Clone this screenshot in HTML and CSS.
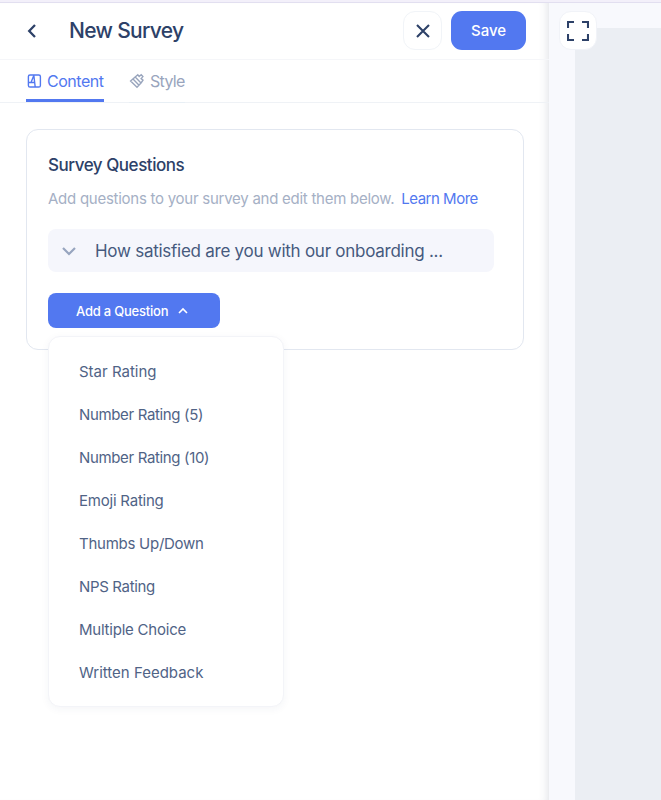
FILE: index.html
```html
<!DOCTYPE html>
<html lang="en">
<head>
    <meta charset="UTF-8">
    <meta name="viewport" content="width=device-width, initial-scale=1.0">
    <title>New Survey</title>
    <link rel="stylesheet" href="styles.css">
</head>
<body>
    <div class="app">
        <div class="editor">
            <header class="header">
                <button class="back" aria-label="Back">
                    <svg width="12" height="16" viewBox="0 0 12 16"><path d="M9 2 3.2 8 9 14"/></svg>
                </button>
                <h1><span class="t-title">New Survey</span></h1>
                <button class="close" aria-label="Close">
                    <svg width="16" height="16" viewBox="0 0 16 16"><path d="M2 2 14 14M14 2 2 14"/></svg>
                </button>
                <button class="save"><span class="t-save">Save</span></button>
            </header>

            <nav class="tabs">
                <a class="tab active" href="#">
                    <svg width="16" height="16" viewBox="0 0 16 16"><rect x="2.4" y="2" width="12" height="12" rx="1.6"/><path d="M7.800 2 9.200 14M7.800 2.500 5 9.500M2.400 9.500h6.200"/></svg>
                    <span class="t-content">Content</span>
                </a>
                <a class="tab" href="#">
                    <svg width="16" height="16" viewBox="0 0 16 16"><path d="M1.6 8 6.200 4 12 10 8 14.200ZM6.200 4l2.600-2.200 1.400 1.800 2-1.800 1.700 1.800-1.800 2 1.900 1.600L12 10M4 6l5.800 6"/></svg>
                    <span class="t-style">Style</span>
                </a>
            </nav>

            <section class="card">
                <h2><span class="t-heading">Survey Questions</span></h2>
                <p class="hint">
                    <span class="t-hint">Add questions to your survey and edit them below.</span>
                    <a href="#" class="t-learn">Learn More</a>
                </p>
                <div class="question">
                    <svg width="16" height="12" viewBox="0 0 16 12"><path d="M2 3l6 6 6-6"/></svg>
                    <span class="t-question">How satisfied are you with our onboarding ...</span>
                </div>
                <div class="dropdown">
                    <button class="add">
                        <span class="t-add">Add a Question</span>
                        <svg width="10" height="8" viewBox="0 0 10 8"><path d="M1 6l4-4 4 4"/></svg>
                    </button>
                    <ul class="menu">
                        <li><span class="t-star">Star Rating</span></li>
                        <li><span class="t-number">Number Rating (5)</span></li>
                        <li><span class="t-number">Number Rating (10)</span></li>
                        <li><span class="t-emoji">Emoji Rating</span></li>
                        <li><span class="t-thumbs">Thumbs Up/Down</span></li>
                        <li><span class="t-nps">NPS Rating</span></li>
                        <li><span class="t-multiple">Multiple Choice</span></li>
                        <li><span class="t-written">Written Feedback</span></li>
                    </ul>
                </div>
            </section>
        </div>

        <main class="preview">
            <div class="canvas"></div>
            <button class="expand" aria-label="Full screen">
                <svg width="22" height="20" viewBox="0 0 22 20"><path d="M1 7V1h6M15 1h6v6M1 13v6h6M21 13v6h-6"/></svg>
            </button>
        </main>
    </div>
</body>
</html>
```

FILE: styles.css
```css
* {
    box-sizing: border-box;
}

body {
    margin: 0;
    height: 800px;
    overflow: hidden;
    border-top: 2px solid #f3f0fa;
    background-color: #f8f9fd;
    font-family: Inter, "Open Sans", sans-serif;
    color: #2d4168;
}

button {
    padding: 0;
    border: none;
    background: none;
    font-family: inherit;
    color: inherit;
    cursor: pointer;
}

a {
    color: #5278f0;
    text-decoration: none;
}

svg {
    display: block;
    flex: none;
    fill: none;
    stroke: currentColor;
}

span {
    white-space: nowrap;
}

.app {
    display: flex;
    height: 798px;
    border-top: 1px solid #e2dff0;
}

.editor {
    width: 549px;
    flex: none;
    background-color: #fff;
    box-shadow: inset -9px 0 10px -8px rgba(45, 55, 90, 0.16);
}

.header {
    display: flex;
    align-items: center;
    height: 57px;
    padding: 0 23px 1px 26px;
    border-bottom: 1px solid #f5f6f9;
}

.back svg {
    stroke-width: 2.3;
}

h1 {
    flex: 1;
    margin: 0 0 0 31px;
    font-size: 21px;
    font-weight: 500;
}

.close {
    display: flex;
    align-items: center;
    justify-content: center;
    width: 39px;
    height: 39px;
    margin-right: 9px;
    border: 1px solid #f1f4f8;
    border-radius: 12px;
}

.close svg {
    stroke-width: 2.1;
}

.save {
    width: 75px;
    height: 39px;
    border-radius: 11px;
    background-color: #5278f0;
    color: #fff;
    font-size: 15px;
    font-weight: 500;
}

.tabs {
    display: flex;
    gap: 25px;
    height: 43px;
    padding-left: 26px;
    border-bottom: 1px solid #eff2f6;
}

.tab {
    display: flex;
    align-items: center;
    gap: 5px;
    height: 42px;
    padding-top: 2px;
    border-bottom: 3px solid transparent;
    box-shadow: 0 1px #e8eff5;
    color: #99a5bd;
    font-size: 16px;
}

.tab svg {
    stroke-width: 1.4;
}

.tab.active {
    width: 78px;
    border-bottom-color: #5278f0;
    box-shadow: none;
    color: #5278f0;
}

.card {
    width: 498px;
    height: 221px;
    margin: 26px 0 0 26px;
    padding: 23px 29px 0 21px;
    border: 1px solid #e2e7f0;
    border-radius: 12px;
}

h2 {
    margin: 0;
    font-size: 17px;
    font-weight: 500;
    line-height: 24px;
}

.hint {
    display: flex;
    gap: 7px;
    margin: 11px 0 19px;
    color: #a5b0c5;
    font-size: 15px;
    line-height: 22px;
    white-space: nowrap;
}

.question {
    display: flex;
    align-items: center;
    gap: 18px;
    height: 43px;
    padding-left: 13px;
    border-radius: 8px;
    background-color: #f5f6fc;
    color: #465a7e;
    font-size: 17px;
}

.question svg {
    stroke: #97a5bf;
    stroke-width: 2.2;
}

.dropdown {
    position: relative;
    margin-top: 21px;
}

.add {
    display: flex;
    align-items: center;
    gap: 10px;
    width: 172px;
    height: 35px;
    padding-left: 28px;
    border-radius: 8px;
    background-color: #5278f0;
    color: #fff;
    font-size: 13px;
    font-weight: 500;
}

.add svg {
    stroke-width: 1.6;
}

.menu {
    position: absolute;
    top: 43px;
    left: 0;
    width: 236px;
    height: 371px;
    margin: 0;
    padding: 13px 30px;
    border: 1px solid #f3f4f8;
    border-radius: 12px;
    background-color: #fff;
    box-shadow: 0 2px 8px rgba(40, 55, 90, 0.05);
    list-style: none;
}

.menu li {
    height: 43px;
    color: #506386;
    font-size: 15px;
    line-height: 43px;
}

.preview {
    position: relative;
    flex: 1;
    padding: 25px 0 0 26px;
}

.canvas {
    height: 100%;
    background-color: #ebeef3;
}

.expand {
    position: absolute;
    top: 8px;
    left: 10px;
    display: flex;
    align-items: center;
    justify-content: center;
    width: 38px;
    height: 39px;
    border: 1px solid #f1f3f8;
    border-radius: 12px;
    background-color: #fff;
}

.expand svg {
    stroke-width: 2.1;
}

/* Letter spacing */
.t-title {
    letter-spacing: -0.67px;
}

.t-content,
.t-learn {
    letter-spacing: -0.48px;
}

.t-style {
    letter-spacing: -0.7px;
}

.t-heading {
    letter-spacing: -0.46px;
}

.t-hint,
.t-question,
.t-thumbs {
    letter-spacing: -0.26px;
}

.t-add,
.t-multiple,
.t-emoji {
    letter-spacing: -0.22px;
}

.t-number,
.t-nps {
    letter-spacing: -0.35px;
}
```
